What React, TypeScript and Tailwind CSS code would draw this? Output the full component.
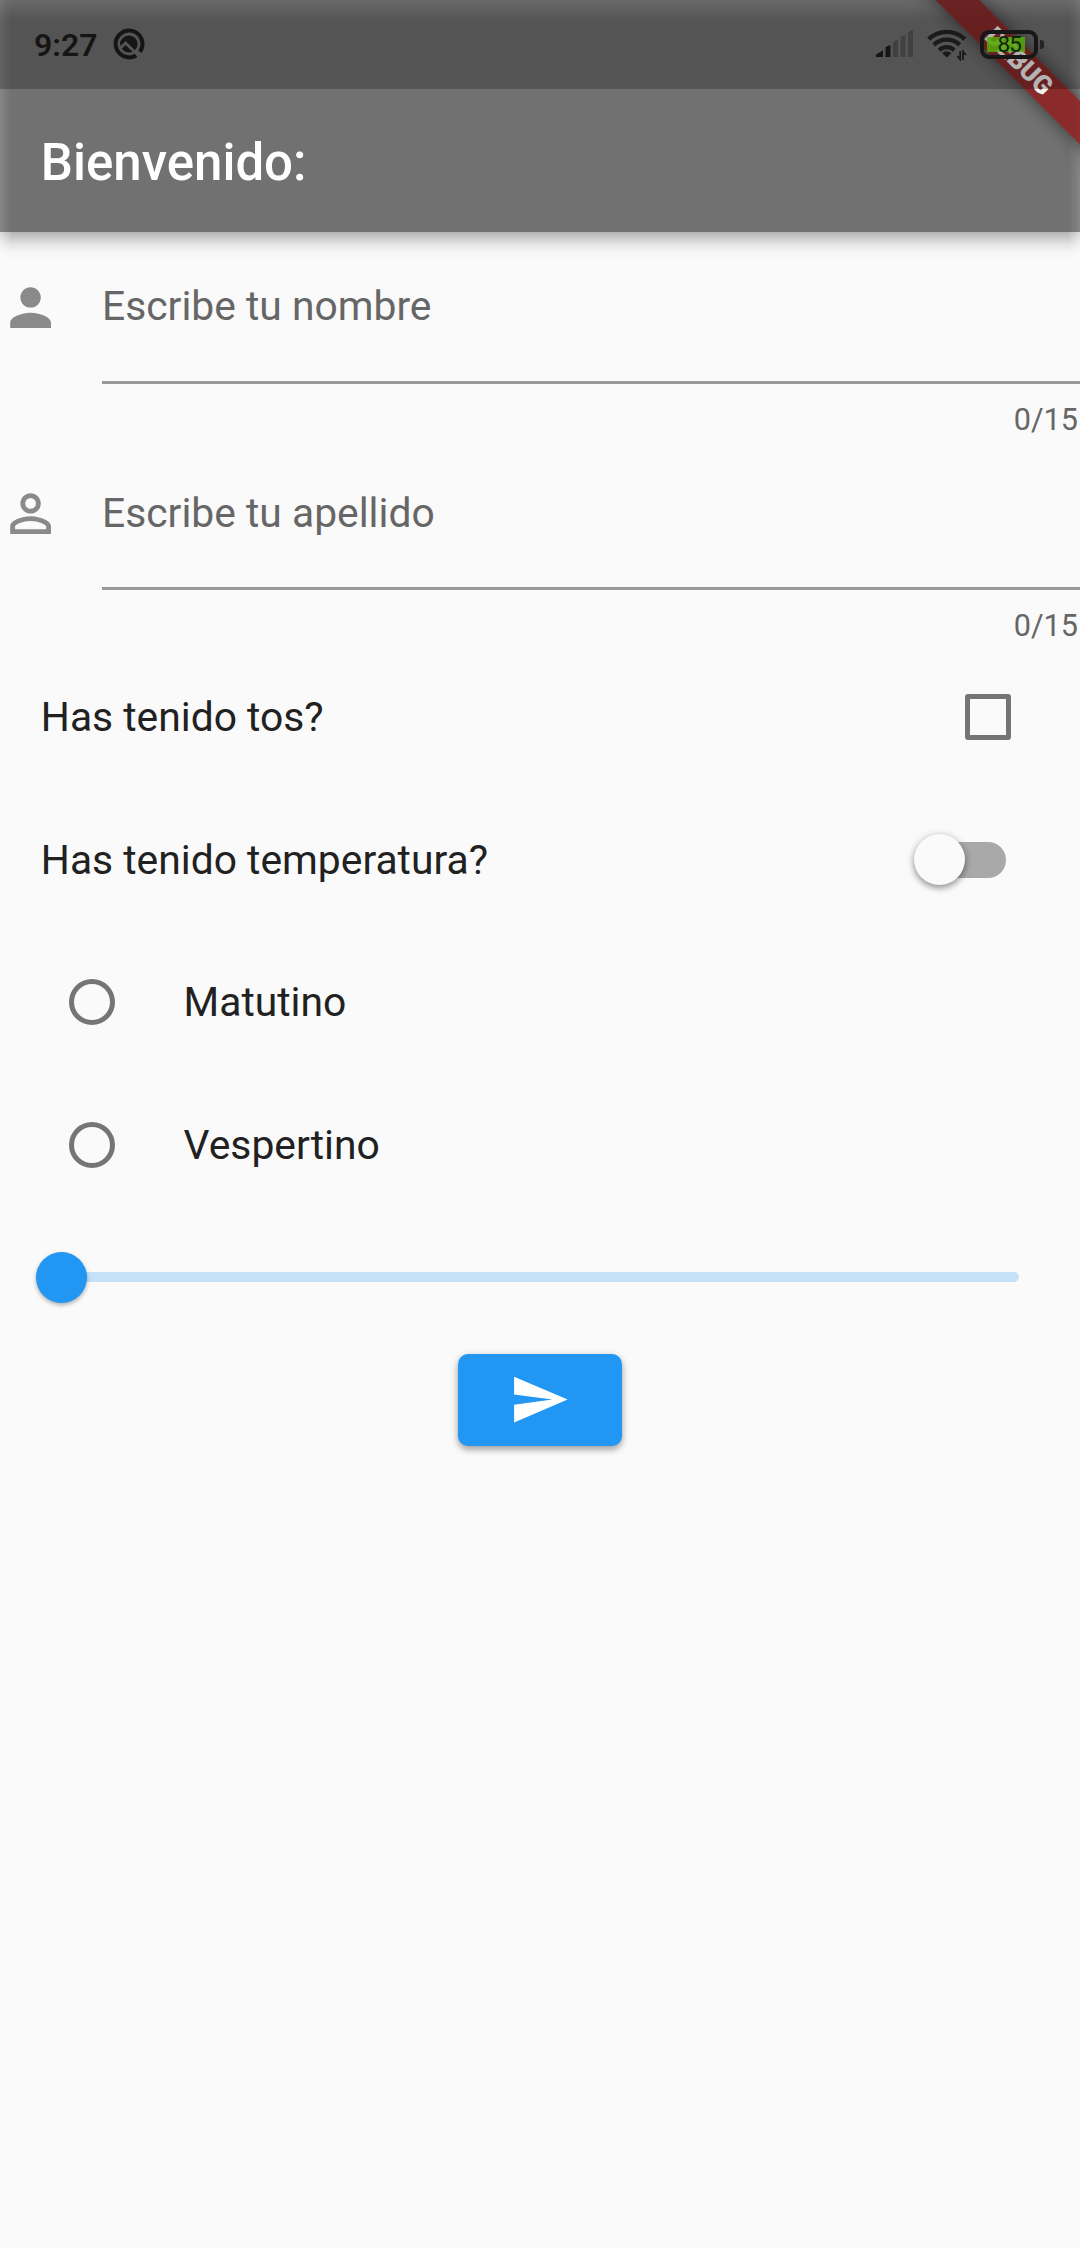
import type { ReactNode } from "react";

function CircleSlashIcon() {
  return (
    <svg className="ml-[15px] h-8 w-8" viewBox="0 0 32 32" fill="none">
      <path d="M23.3 27.2A13.4 13.4 0 1 1 26.9 23.8" stroke="#151515" strokeWidth="4" />
      <circle cx="16" cy="16" r="8.6" fill="#151515" />
      <path d="M7 20.5L12.5 15L25 27" stroke="#555" strokeWidth="3" />
      <path d="M7.6 17.5L12 13L9.6 10.8L7 14Z" fill="#151515" />
    </svg>
  );
}

function SignalIcon() {
  return (
    <svg className="h-[28px] w-[38px]" viewBox="0 0 38 28">
      <path d="M.5 26.5Q.5 24.8 2 24L8 20.3V27H1Z" fill="#151515" />
      <path d="M10.5 17.5Q13 15 15.5 15V27H10.5Z" fill="#151515" />
      <path d="M18 12.5Q20.5 10 23 10V27H18ZM25.5 7.5Q28 5 30.5 5V27H25.5ZM33 2.5Q35.5 0 38 0V27H33Z" fill="#404040" />
    </svg>
  );
}

function WifiIcon() {
  return (
    <svg className="-mt-[1px] ml-[14.5px] h-8 w-10" viewBox="0 0 40 32" fill="none" stroke="#1a1a1a">
      <path d="M1.7 10.2A26 26 0 0 1 37.8 10.2" strokeWidth="4.4" />
      <path d="M6.8 15.9A18.5 18.5 0 0 1 32.7 15.9" strokeWidth="4.4" />
      <path d="M12.2 21.2A10.8 10.8 0 0 1 27.3 21.2" strokeWidth="4.2" />
      <path d="M19.8 22.2Q23 22.2 24.4 24.2L19.8 28.5L15.2 24.2Q16.6 22.2 19.8 22.2Z" fill="#1a1a1a" stroke="none" />
      <path d="M33.2 22V30.5L30.5 27M36 31V22.500L38.800 26" strokeWidth="1.800" />
    </svg>
  );
}

function Battery() {
  return (
    <div className="ml-[13px] flex h-[28px] items-center">
      <div className="flex h-[29px] w-[58px] items-center rounded-[9px] border-[4px] border-[#171717] px-[2.5px]">
        <div className="relative h-[15px] w-[38px] bg-[#56ac08]/85">
          <span className="absolute top-[-6px] left-[11px] text-[22.5px] leading-[26px] tracking-[-1px] text-[#10240a]">85</span>
        </div>
      </div>
      <div className="ml-[2px] h-[9px] w-[4px] rounded-r-[3px] bg-[#242424]" />
    </div>
  );
}

function Field({ icon, label }: { icon: ReactNode; label: string }) {
  return (
    <div className="flex h-[206.2px]">
      <svg className="mt-[14.5px] h-[61.2px] w-[61.2px] shrink-0 fill-[#8a8a8a]" viewBox="0 0 24 24">
        {icon}
      </svg>
      <div className="ml-[40.8px] flex-1">
        <div className="h-[119px] pt-[20.4px] text-[40.8px] leading-[48px] text-[#666]">{label}</div>
        <div className="h-[3px] bg-[#999]" />
        <div className="pt-[18px] pr-[2px] text-right text-[30.6px] leading-[36px] text-[#666]">0/15</div>
      </div>
    </div>
  );
}

function Row({ label, children }: { label: string; children: ReactNode }) {
  return (
    <div className="flex h-[142.8px] items-center justify-between pl-[40.8px] text-[40.8px] leading-[48px] text-[#212121]">
      <span>{label}</span>
      {children}
    </div>
  );
}

function Choice({ label }: { label: string }) {
  return (
    <div className="flex h-[142.8px] items-center pl-[69px] text-[40.8px] leading-[48px] text-[#212121]">
      <div className="h-[46px] w-[46px] rounded-full border-[5px] border-[#757575]" />
      <span className="ml-[68.6px]">{label}</span>
    </div>
  );
}

export default function App() {
  return (
    <div className="flex h-[2248px] w-[1080px] flex-col overflow-hidden bg-[#fafafa] font-['Roboto',sans-serif]">
      <header className="relative h-[232px] shrink-0 bg-[#717171]">
        <div className="absolute inset-0 bg-[linear-gradient(to_right,#ffffff28,#ffffff12_5px,transparent_12px,transparent_1068px,#ffffff12_1075px,#ffffff28),linear-gradient(to_bottom,#ffffff30,#ffffff24_6px,transparent_20px)]" />
        <div className="absolute top-[232px] left-0 h-[28px] w-full bg-[linear-gradient(to_bottom,#00000047,#00000030_6px,#00000014_13px,#00000005_20px,transparent)] [mask-image:linear-gradient(to_right,#0006,black_12px,black_1068px,#0006)]" />
        <div className="absolute inset-0 overflow-hidden">
          <div className="absolute top-[46px] left-[868.7px] flex h-[30.6px] w-[300px] rotate-45 items-center justify-center bg-[#8f1c1c]/83 text-[26px] font-black text-[#f1f1f1] shadow-[0_0_18px_#00000080]">
            <span>DEBUG</span>
          </div>
        </div>
        <div className="relative flex h-[89px] items-start bg-black/25 pl-[34px]">
          <span className="mt-[25.5px] text-[32px] leading-[39px] font-semibold text-[#151515]">9:27</span>
          <div className="mt-[28px]"><CircleSlashIcon /></div>
          <div className="mt-[30px] ml-auto flex pr-[36px]">
            <SignalIcon />
            <WifiIcon />
            <Battery />
          </div>
        </div>
        <h1 className="relative flex h-[143px] items-center pt-[5px] pl-[40.8px] text-[51px] font-medium text-white">Bienvenido:</h1>
      </header>

      <main className="pt-[30px]">
        <Field
          label="Escribe tu nombre"
          icon={<path d="M12 12c2.21 0 4-1.79 4-4s-1.79-4-4-4-4 1.79-4 4 1.79 4 4 4zm0 2c-2.67 0-8 1.34-8 4v2h16v-2c0-2.66-5.33-4-8-4z" />}
        />
        <Field
          label="Escribe tu apellido"
          icon={<path d="M12 5.9a2.1 2.1 0 1 1 0 4.2 2.1 2.1 0 0 1 0-4.2m0 9c2.97 0 6.1 1.46 6.1 2.1v1.1H5.9V17c0-.64 3.13-2.1 6.1-2.1M12 4C9.79 4 8 5.79 8 8s1.79 4 4 4 4-1.79 4-4-1.79-4-4-4zm0 9c-2.67 0-8 1.34-8 4v3h16v-3c0-2.66-5.33-4-8-4z" />}
        />
        <div className="-mt-[29px]">
          <Row label="Has tenido tos?">
            <div className="mr-[69px] h-[46px] w-[46px] rounded-[3px] border-[5px] border-[#757575]" />
          </Row>
          <Row label="Has tenido temperatura?">
            <div className="mr-[74px] flex h-[36px] w-[84px] items-center rounded-full bg-[#a9a9a9]">
              <div className="-ml-[8px] h-[51px] w-[51px] shrink-0 rounded-full bg-[#fafafa] shadow-[0_3px_6px_#00000059,0_1px_10px_#00000024]" />
            </div>
          </Row>
          <Choice label="Matutino" />
          <Choice label="Vespertino" />
        </div>
        <div className="mt-[55.5px] ml-[61px] flex h-[10px] w-[958px] items-center rounded-full bg-[#c5e1f8]">
          <div className="-ml-[25.5px] h-[51px] w-[51px] rounded-full bg-[#2196f3] shadow-[0_2px_4px_#00000050]" />
        </div>
        <div className="mx-auto mt-[71.5px] flex h-[92px] w-[163.2px] items-center justify-center rounded-[10px] bg-[#2196f3] shadow-[0_4px_6px_#00000048,0_1px_8px_#00000020]">
          <svg className="h-[61.2px] w-[61.2px] fill-white" viewBox="0 0 24 24">
            <path d="M2.01 21L23 12 2.01 3 2 10l15 2-15 2z" />
          </svg>
        </div>
      </main>
    </div>
  );
}
